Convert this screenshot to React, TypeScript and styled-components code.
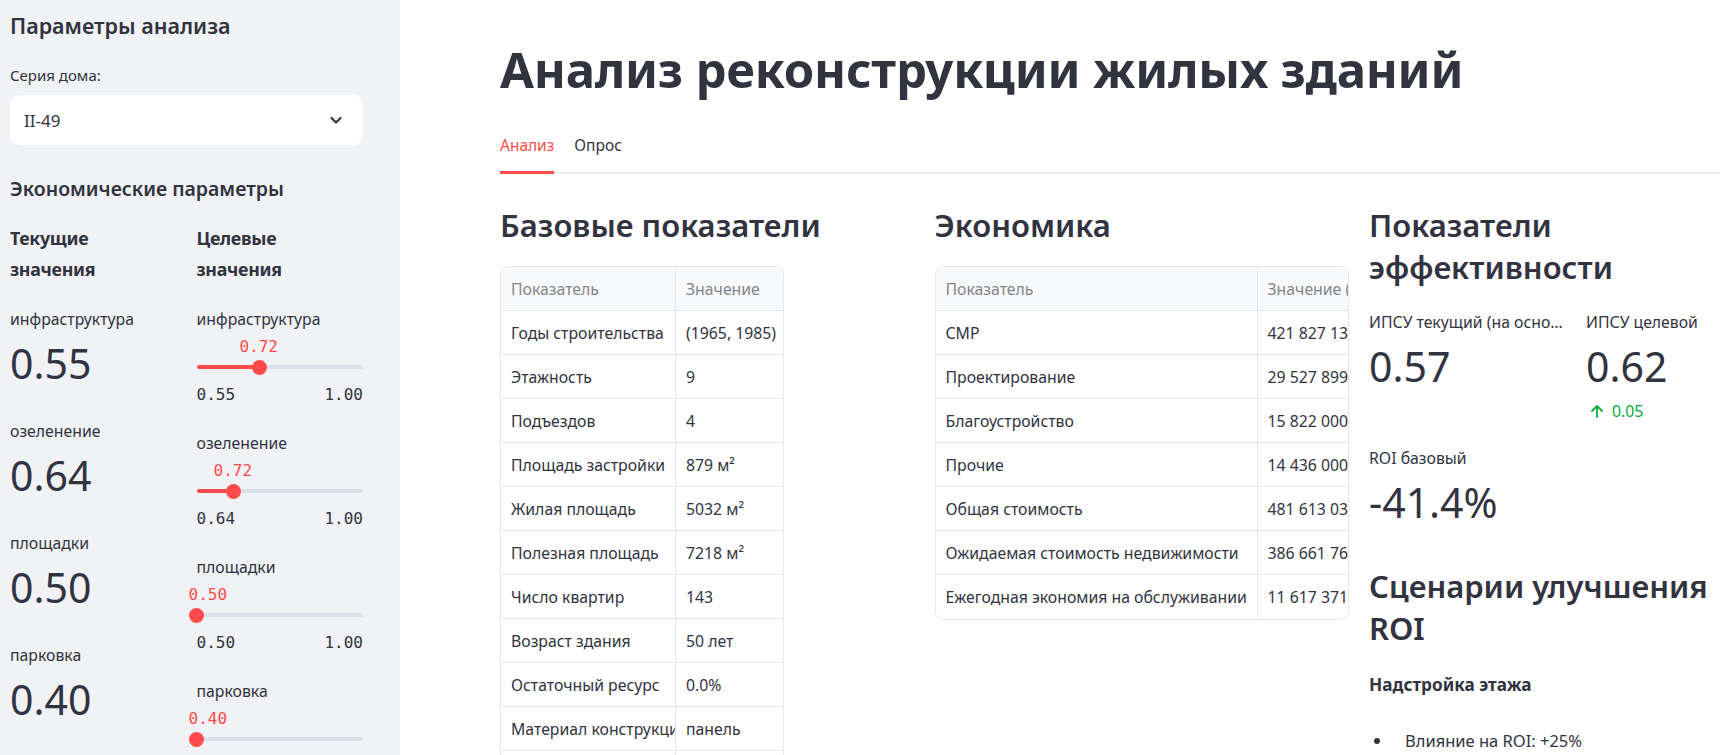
import React from "react";
import styled, { createGlobalStyle } from "styled-components";

const GlobalStyle = createGlobalStyle`
  html, body { margin: 0; padding: 0; height: 100%; overflow: hidden; background: #ffffff; }
  body { font-family: "Noto Sans", "Open Sans", sans-serif; color: #31333f; }
  #root { height: 100%; }
  * { box-sizing: border-box; }
`;

const Page = styled.div`
  display: flex;
  width: 1720px;
  height: 755px;
  overflow: hidden;
`;

const Sidebar = styled.aside`
  flex: 0 0 400px;
  background: #f0f2f6;
  padding: 14px 37px 0 10px;
  overflow: hidden;
`;

const SideHeading = styled.h2<{ $mt?: number; $size: number }>`
  margin: ${(p) => p.$mt ?? 0}px 0 0 0;
  font-size: ${(p) => p.$size}px;
  font-weight: 600;
  line-height: 24px;
`;

const FieldLabel = styled.div`
  margin-top: 25px;
  font-size: 15px;
  line-height: 24px;
`;

const Select = styled.div`
  margin-top: 8px;
  height: 50px;
  background: #ffffff;
  border-radius: 10px;
  display: flex;
  align-items: center;
  justify-content: space-between;
  padding: 0 20px 0 14px;
  font-size: 17px;
`;

const SideColumns = styled.div`
  margin-top: 22px;
  display: grid;
  grid-template-columns: 1fr 1fr;
  column-gap: 20px;
`;

const SideColumn = styled.div`
  display: flex;
  flex-direction: column;
  min-width: 0;
`;

const ColHeading = styled.div`
  font-size: 17.8px;
  font-weight: 700;
  letter-spacing: -0.3px;
  line-height: 31px;
  margin-bottom: 22px;
`;

const MetricLabel = styled.div`
  font-size: 15.8px;
  line-height: 24px;
  white-space: nowrap;
  overflow: hidden;
  text-overflow: ellipsis;
`;

const MetricValue = styled.div`
  margin-top: 8px;
  font-size: 41px;
  line-height: 49px;
  font-weight: 400;
`;

const SideMetric = styled.div`
  margin-bottom: 31px;
`;

const SliderBlock = styled.div`
  margin-bottom: 26px;
`;

const SliderValueRow = styled.div`
  position: relative;
  margin-top: 6px;
  height: 20px;
`;

const Bubble = styled.span`
  position: absolute;
  top: 0;
  font-family: "DejaVu Sans Mono", "Liberation Mono", monospace;
  font-size: 16px;
  line-height: 20px;
  color: #ff4b4b;
  white-space: nowrap;
`;

const TrackArea = styled.div`
  position: relative;
  margin-top: 3px;
  height: 14px;
  display: flex;
  align-items: center;
`;

const Rail = styled.div`
  position: relative;
  width: 100%;
  height: 4px;
  border-radius: 2px;
  background: #dcdfe7;
`;

const Fill = styled.div`
  position: absolute;
  left: 0;
  top: 0;
  height: 4px;
  border-radius: 2px;
  background: #ff4b4b;
`;

const Thumb = styled.div`
  position: absolute;
  top: 50%;
  width: 15px;
  height: 15px;
  margin-top: -7.5px;
  margin-left: -7.5px;
  border-radius: 50%;
  background: #ff4b4b;
`;

const MinMax = styled.div`
  margin-top: 11px;
  height: 20px;
  display: flex;
  justify-content: space-between;
  font-family: "DejaVu Sans Mono", "Liberation Mono", monospace;
  font-size: 16px;
  line-height: 20px;
  color: #31333f;
`;

const Main = styled.main`
  flex: 1;
  min-width: 0;
  overflow: hidden;
  padding: 39px 0 0 100px;
`;

const MainInner = styled.div`
  width: 1284px;
`;

const Title = styled.h1`
  margin: 0;
  font-size: 49px;
  line-height: 60px;
  font-weight: 700;
  letter-spacing: -0.2px;
  white-space: nowrap;
`;

const TabBar = styled.div`
  margin-top: 23px;
  display: flex;
  gap: 20px;
  border-bottom: 2px solid #ebebec;
`;

const Tab = styled.div<{ $active?: boolean }>`
  position: relative;
  height: 50px;
  padding-top: 11px;
  font-size: 15.5px;
  line-height: 24px;
  color: ${(p) => (p.$active ? "#ff4b4b" : "#31333f")};
  &::after {
    content: "";
    position: absolute;
    left: 0;
    right: 0;
    bottom: -2px;
    height: 3px;
    background: ${(p) => (p.$active ? "#ff4b4b" : "transparent")};
  }
`;

const Columns = styled.div`
  margin-top: 30px;
  display: grid;
  grid-template-columns: repeat(3, 414.5px);
  column-gap: 20px;
  align-items: start;
`;

const Column = styled.section`
  min-width: 0;
`;

const H3 = styled.h3<{ $mt?: number }>`
  margin: ${(p) => p.$mt ?? 0}px 0 0 0;
  font-size: 31px;
  line-height: 42px;
  font-weight: 600;
`;

const TableWrap = styled.div<{ $width: string }>`
  margin-top: 20px;
  width: ${(p) => p.$width};
  border: 1px solid #e6e8ee;
  border-radius: 8px;
  overflow: hidden;
  background: #ffffff;
`;

const TRow = styled.div<{ $cols: string; $head?: boolean }>`
  display: grid;
  grid-template-columns: ${(p) => p.$cols};
  height: 44px;
  background: ${(p) => (p.$head ? "#f8f9fb" : "#ffffff")};
  border-bottom: 1px solid #e6e8ee;
  &:last-child { border-bottom: none; }
`;

const TCell = styled.div<{ $head?: boolean }>`
  display: flex;
  align-items: center;
  padding: 0 10px;
  font-size: 15.8px;
  white-space: nowrap;
  overflow: hidden;
  color: ${(p) => (p.$head ? "#83858d" : "#31333f")};
  &:first-child { border-right: 1px solid #e6e8ee; }
`;

const MetricsRow = styled.div<{ $mt: number }>`
  margin-top: ${(p) => p.$mt}px;
  display: grid;
  grid-template-columns: 197px 197px;
  column-gap: 20px;
`;

const Delta = styled.div`
  margin-top: 8px;
  display: flex;
  align-items: center;
  gap: 7px;
  padding-left: 3px;
  font-size: 15.8px;
  line-height: 24px;
  color: #09ab3b;
`;

const SubHeading = styled.div`
  margin-top: 24px;
  font-size: 17.2px;
  line-height: 24px;
  font-weight: 700;
`;

const BulletList = styled.ul`
  margin: 32px 0 0 0;
  padding: 0;
  list-style: none;
`;

const Bullet = styled.li`
  display: flex;
  align-items: center;
  font-size: 16.5px;
  line-height: 24px;
  &::before {
    content: "";
    width: 6px;
    height: 6px;
    border-radius: 50%;
    background: #31333f;
    margin-left: 5px;
    margin-right: 25px;
    flex: 0 0 6px;
  }
`;

const sideMetrics = [
  ["инфраструктура", "0.55"],
  ["озеленение", "0.64"],
  ["площадки", "0.50"],
  ["парковка", "0.40"],
];

const sliders = [
  { label: "инфраструктура", min: 0.55, value: 0.72 },
  { label: "озеленение", min: 0.64, value: 0.72 },
  { label: "площадки", min: 0.5, value: 0.5 },
  { label: "парковка", min: 0.4, value: 0.4 },
];

const baseRows = [
  ["Годы строительства", "(1965, 1985)"],
  ["Этажность", "9"],
  ["Подъездов", "4"],
  ["Площадь застройки", "879 м²"],
  ["Жилая площадь", "5032 м²"],
  ["Полезная площадь", "7218 м²"],
  ["Число квартир", "143"],
  ["Возраст здания", "50 лет"],
  ["Остаточный ресурс", "0.0%"],
  ["Материал конструкции", "панель"],
  ["Тип перекрытий", "ж/б"],
];

const econRows = [
  ["СМР", "421 827 138"],
  ["Проектирование", "29 527 899"],
  ["Благоустройство", "15 822 000"],
  ["Прочие", "14 436 000"],
  ["Общая стоимость", "481 613 037"],
  ["Ожидаемая стоимость недвижимости", "386 661 761"],
  ["Ежегодная экономия на обслуживании", "11 617 371"],
];

const TRACK = 166.5;

function Slider({ label, min, value }: { label: string; min: number; value: number }) {
  const frac = (value - min) / (1 - min);
  const center = frac * TRACK;
  const bubbleLeft = Math.max(center - 20, -8);
  return (
    <SliderBlock>
      <MetricLabel>{label}</MetricLabel>
      <SliderValueRow>
        <Bubble style={{ left: bubbleLeft }}>{value.toFixed(2)}</Bubble>
      </SliderValueRow>
      <TrackArea>
        <Rail>
          <Fill style={{ width: center }} />
          <Thumb style={{ left: center }} />
        </Rail>
      </TrackArea>
      <MinMax>
        <span>{min.toFixed(2)}</span>
        <span>1.00</span>
      </MinMax>
    </SliderBlock>
  );
}

function Chevron() {
  return (
    <svg width="14" height="14" viewBox="0 0 14 14" fill="none">
      <path d="M2.5 5l4.5 4.5L11.5 5" stroke="#31333f" strokeWidth="2.2" strokeLinecap="round" strokeLinejoin="round" />
    </svg>
  );
}

function ArrowUp() {
  return (
    <svg width="16" height="16" viewBox="0 0 16 16" fill="none">
      <path d="M8 14V3M3 8l5-5 5 5" stroke="#09ab3b" strokeWidth="1.8" strokeLinecap="round" strokeLinejoin="round" />
    </svg>
  );
}

function DataTable({ rows, width, cols, head }: { rows: string[][]; width: string; cols: string; head: string[] }) {
  return (
    <TableWrap $width={width}>
      <TRow $cols={cols} $head>
        <TCell $head>{head[0]}</TCell>
        <TCell $head>{head[1]}</TCell>
      </TRow>
      {rows.map((r) => (
        <TRow key={r[0]} $cols={cols}>
          <TCell>{r[0]}</TCell>
          <TCell>{r[1]}</TCell>
        </TRow>
      ))}
    </TableWrap>
  );
}

export default function App() {
  return (
    <>
      <GlobalStyle />
      <Page>
        <Sidebar>
          <SideHeading $size={21.5}>Параметры анализа</SideHeading>
          <FieldLabel>Серия дома:</FieldLabel>
          <Select>
            <span>II-49</span>
            <Chevron />
          </Select>
          <SideHeading $mt={32} $size={19.5}>
            Экономические параметры
          </SideHeading>
          <SideColumns>
            <SideColumn>
              <ColHeading>
                Текущие
                <br />
                значения
              </ColHeading>
              {sideMetrics.map(([l, v]) => (
                <SideMetric key={l}>
                  <MetricLabel>{l}</MetricLabel>
                  <MetricValue>{v}</MetricValue>
                </SideMetric>
              ))}
            </SideColumn>
            <SideColumn>
              <ColHeading>
                Целевые
                <br />
                значения
              </ColHeading>
              {sliders.map((s) => (
                <Slider key={s.label} {...s} />
              ))}
            </SideColumn>
          </SideColumns>
        </Sidebar>
        <Main>
          <MainInner>
            <Title>Анализ реконструкции жилых зданий</Title>
            <TabBar>
              <Tab $active>Анализ</Tab>
              <Tab>Опрос</Tab>
            </TabBar>
            <Columns>
              <Column>
                <H3>Базовые показатели</H3>
                <DataTable rows={baseRows} width="284px" cols="175px 109px" head={["Показатель", "Значение"]} />
              </Column>
              <Column>
                <H3>Экономика</H3>
                <DataTable rows={econRows} width="100%" cols="322px 140px" head={["Показатель", "Значение (руб.)"]} />
              </Column>
              <Column>
                <H3>
                  Показатели
                  <br />
                  эффективности
                </H3>
                <MetricsRow $mt={22}>
                  <div>
                    <MetricLabel>ИПСУ текущий (на основе текущих значений)</MetricLabel>
                    <MetricValue>0.57</MetricValue>
                  </div>
                  <div>
                    <MetricLabel>ИПСУ целевой</MetricLabel>
                    <MetricValue>0.62</MetricValue>
                    <Delta>
                      <ArrowUp />
                      <span>0.05</span>
                    </Delta>
                  </div>
                </MetricsRow>
                <MetricsRow $mt={23}>
                  <div>
                    <MetricLabel>ROI базовый</MetricLabel>
                    <MetricValue>-41.4%</MetricValue>
                  </div>
                </MetricsRow>
                <H3 $mt={38}>
                  Сценарии улучшения
                  <br />
                  ROI
                </H3>
                <SubHeading>Надстройка этажа</SubHeading>
                <BulletList>
                  <Bullet>Влияние на ROI: +25%</Bullet>
                </BulletList>
              </Column>
            </Columns>
          </MainInner>
        </Main>
      </Page>
    </>
  );
}
